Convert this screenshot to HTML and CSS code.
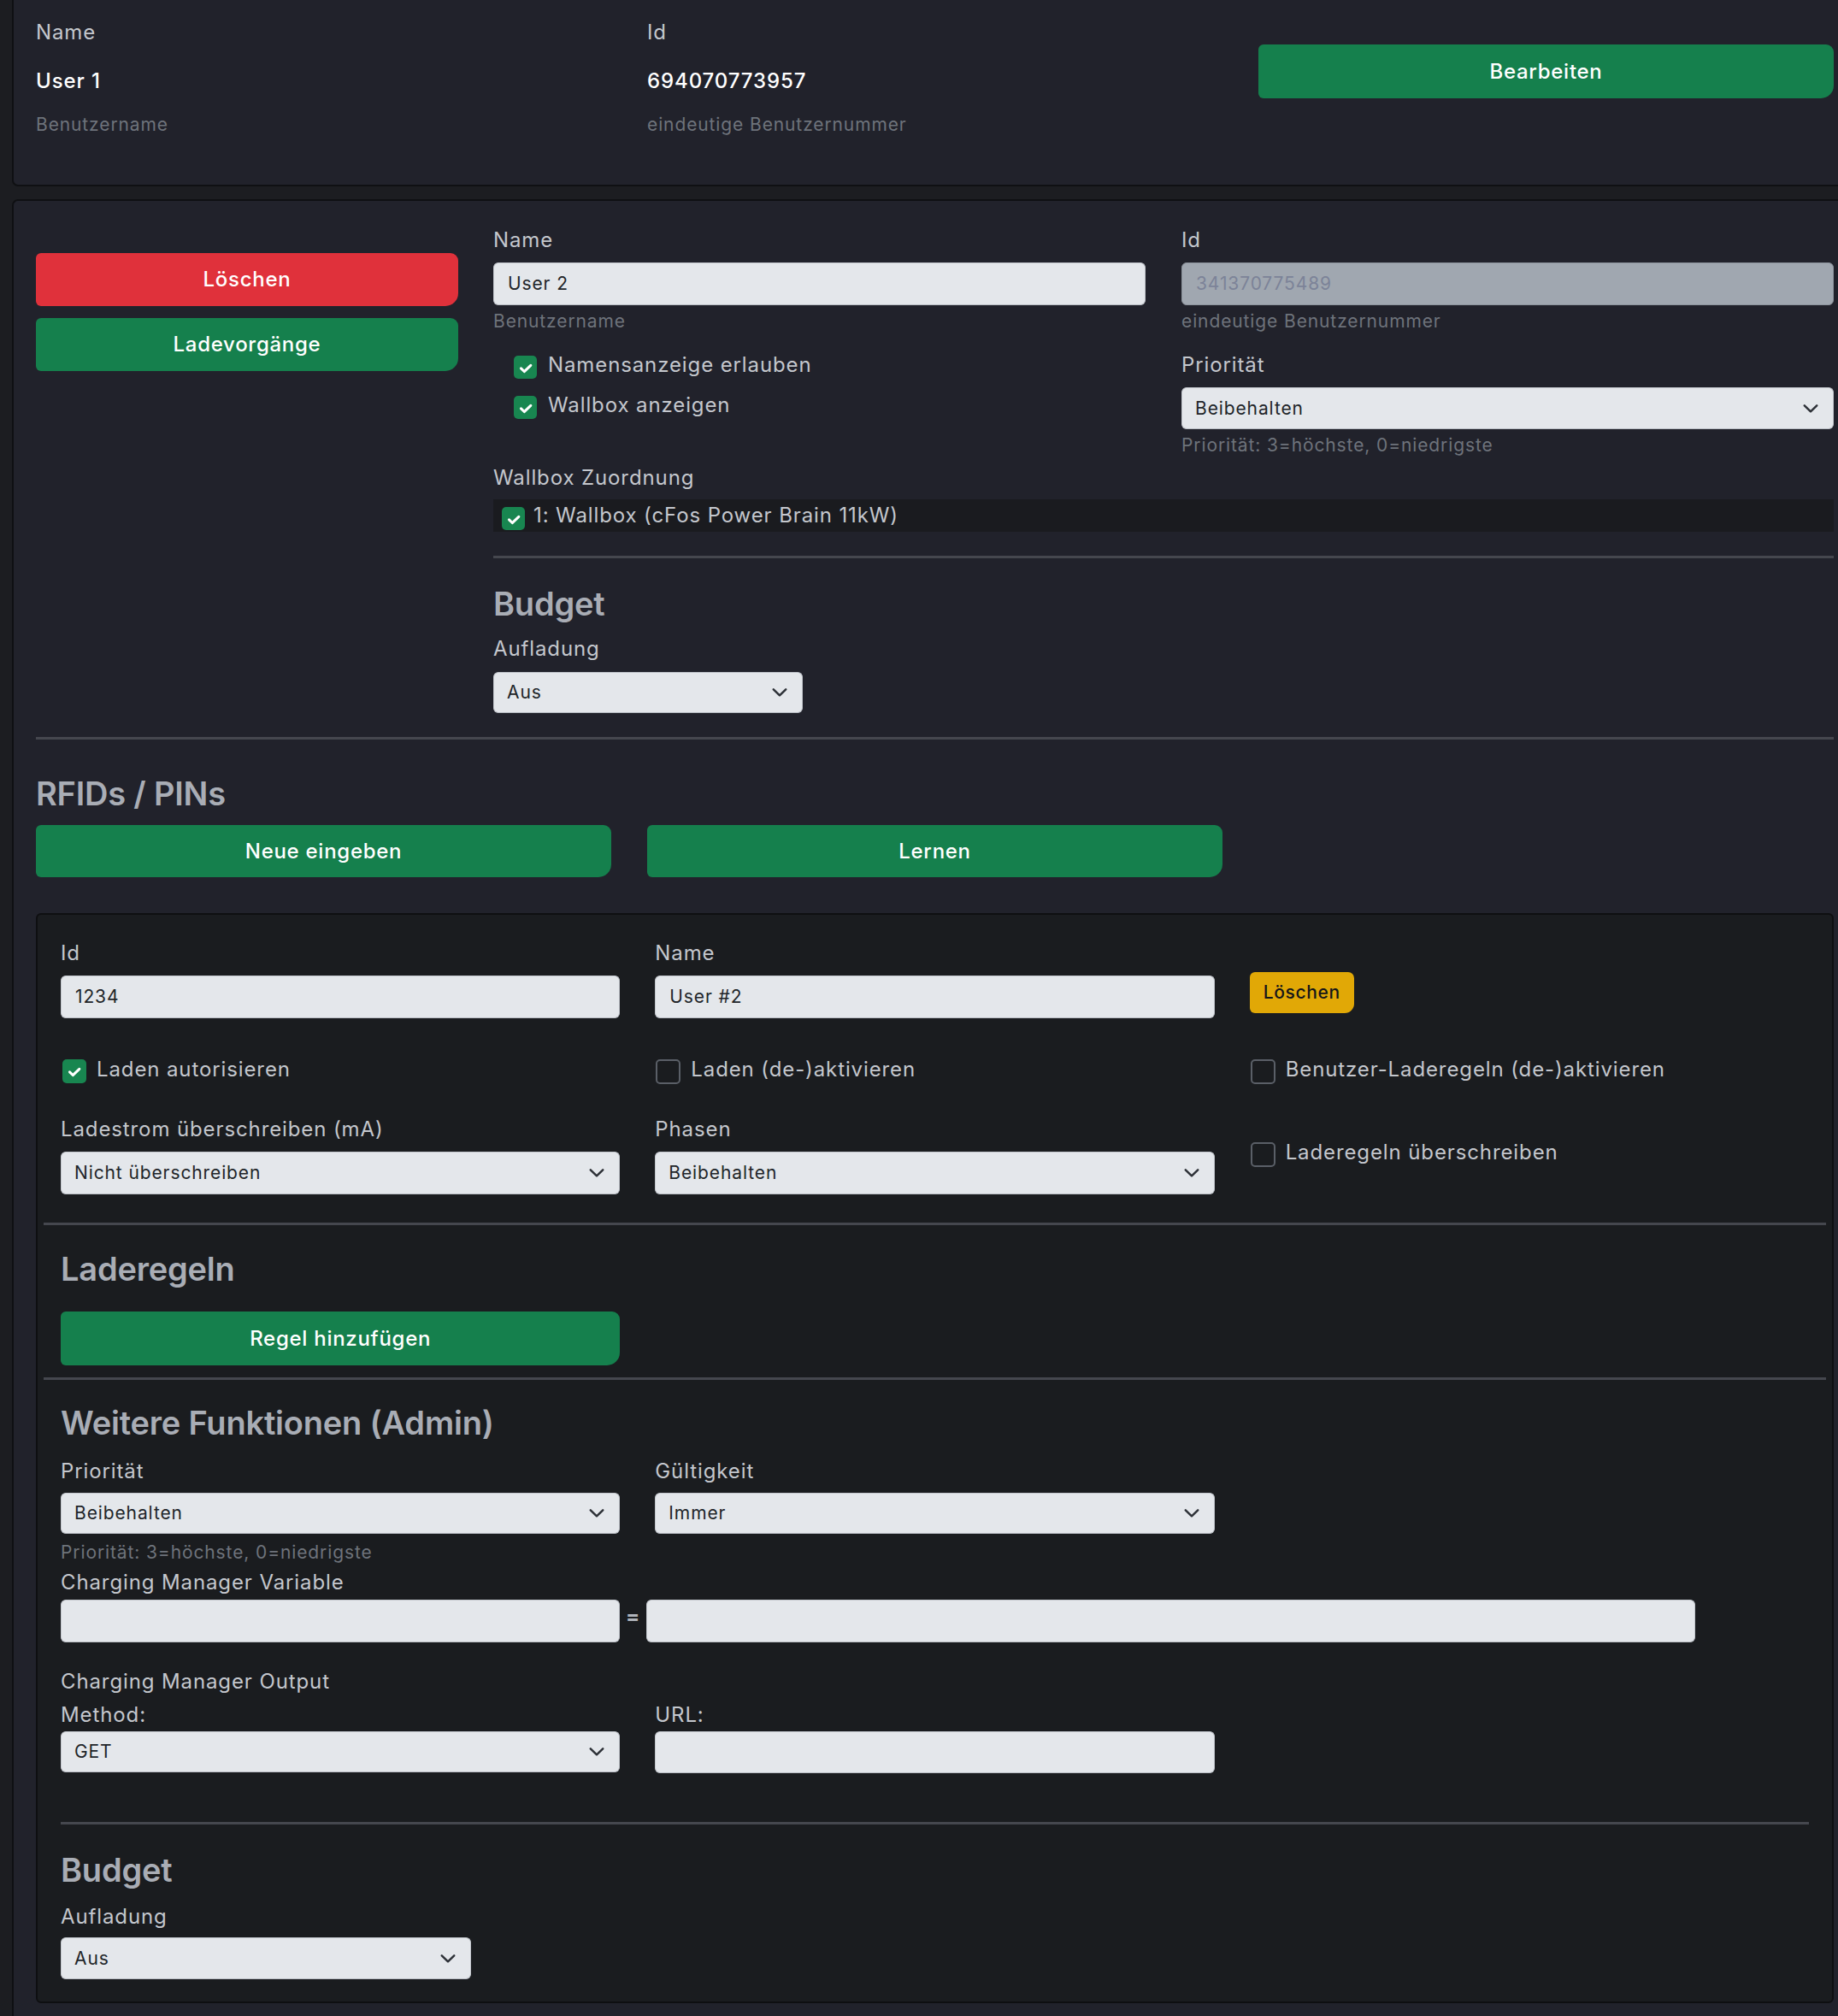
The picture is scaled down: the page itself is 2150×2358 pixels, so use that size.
FILE: index.html
```html
<!DOCTYPE html>
<html lang="de">
<head>
<meta charset="utf-8">
<title>Benutzer</title>
<link rel="stylesheet" href="styles.css">
</head>
<body>
<div class="page">

  <section class="card card-top">
    <div class="cols3">
      <div class="field">
        <div class="lbl">Name</div>
        <div class="val">User 1</div>
        <div class="hint">Benutzername</div>
      </div>
      <div class="field">
        <div class="lbl">Id</div>
        <div class="val">694070773957</div>
        <div class="hint">eindeutige Benutzernummer</div>
      </div>
      <div class="field">
        <button class="btn btn-green btn-edit">Bearbeiten</button>
      </div>
    </div>
  </section>

  <section class="card card-user">
    <div class="user-grid">
      <div class="side">
        <button class="btn btn-red btn-side">Löschen</button>
        <button class="btn btn-green btn-side">Ladevorgänge</button>
      </div>
      <div class="main">
        <div class="two">
          <div class="field">
            <div class="lbl">Name</div>
            <div class="input">User 2</div>
            <div class="hint hint-after">Benutzername</div>
            <div class="checks">
              <div class="check">
                <span class="box on"><svg viewBox="0 0 20 20"><path d="M5 10.8l3.4 3.3L15.3 7.6"/></svg></span>
                <span>Namensanzeige erlauben</span>
              </div>
              <div class="check">
                <span class="box on"><svg viewBox="0 0 20 20"><path d="M5 10.8l3.4 3.3L15.3 7.6"/></svg></span>
                <span>Wallbox anzeigen</span>
              </div>
            </div>
          </div>
          <div class="field">
            <div class="lbl">Id</div>
            <div class="input disabled">341370775489</div>
            <div class="hint hint-after">eindeutige Benutzernummer</div>
            <div class="lbl lbl-prio">Priorität</div>
            <div class="select sel-49">Beibehalten<svg class="chev" viewBox="0 0 16 9"><path d="M1.5 1.2l6.5 6.3 6.5-6.3"/></svg></div>
            <div class="hint hint-after">Priorität: 3=höchste, 0=niedrigste</div>
          </div>
        </div>
        <div class="lbl lbl-wallbox">Wallbox Zuordnung</div>
        <div class="band">
          <span class="box on"><svg viewBox="0 0 20 20"><path d="M5 10.8l3.4 3.3L15.3 7.6"/></svg></span>
          <span>1: Wallbox (cFos Power Brain 11kW)</span>
        </div>
        <hr class="rule rule-main">
        <h4 class="heading h-budget1">Budget</h4>
        <div class="lbl lbl-auf1">Aufladung</div>
        <div class="select sel-budget1">Aus<svg class="chev" viewBox="0 0 16 9"><path d="M1.5 1.2l6.5 6.3 6.5-6.3"/></svg></div>
      </div>
    </div>

    <hr class="rule rule-full">
    <h4 class="heading h-rfid">RFIDs / PINs</h4>
    <div class="cols3 btn-row">
      <button class="btn btn-green btn-rfid">Neue eingeben</button>
      <button class="btn btn-green btn-rfid">Lernen</button>
    </div>

    <div class="rfid-card">
      <div class="sec">
        <div class="grid3">
          <div class="field">
            <div class="lbl">Id</div>
            <div class="input in-rfid">1234</div>
          </div>
          <div class="field">
            <div class="lbl">Name</div>
            <div class="input in-rfid">User #2</div>
          </div>
          <div class="field">
            <button class="btn btn-yellow">Löschen</button>
          </div>
        </div>
        <div class="grid3 row-checks">
          <div class="check check-r">
            <span class="box on"><svg viewBox="0 0 20 20"><path d="M5 10.8l3.4 3.3L15.3 7.6"/></svg></span>
            <span>Laden autorisieren</span>
          </div>
          <div class="check check-r">
            <span class="box off"></span>
            <span>Laden (de-)aktivieren</span>
          </div>
          <div class="check check-r">
            <span class="box off"></span>
            <span>Benutzer-Laderegeln (de-)aktivieren</span>
          </div>
        </div>
        <div class="grid3 row-strom">
          <div class="field">
            <div class="lbl">Ladestrom überschreiben (mA)</div>
            <div class="select sel-50">Nicht überschreiben<svg class="chev" viewBox="0 0 16 9"><path d="M1.5 1.2l6.5 6.3 6.5-6.3"/></svg></div>
          </div>
          <div class="field">
            <div class="lbl">Phasen</div>
            <div class="select sel-50">Beibehalten<svg class="chev" viewBox="0 0 16 9"><path d="M1.5 1.2l6.5 6.3 6.5-6.3"/></svg></div>
          </div>
          <div class="check check-r check-over">
            <span class="box off"></span>
            <span>Laderegeln überschreiben</span>
          </div>
        </div>
      </div>

      <hr class="rule rule-wide rule-a">
      <div class="sec">
        <h4 class="heading h-lade">Laderegeln</h4>
        <div class="grid3">
          <button class="btn btn-green btn-rule">Regel hinzufügen</button>
        </div>
      </div>
      <hr class="rule rule-wide rule-b">

      <div class="sec">
        <h4 class="heading h-admin">Weitere Funktionen (Admin)</h4>
        <div class="grid3 row-prio">
          <div class="field">
            <div class="lbl">Priorität</div>
            <div class="select sel-48">Beibehalten<svg class="chev" viewBox="0 0 16 9"><path d="M1.5 1.2l6.5 6.3 6.5-6.3"/></svg></div>
            <div class="hint hint-prio">Priorität: 3=höchste, 0=niedrigste</div>
          </div>
          <div class="field">
            <div class="lbl">Gültigkeit</div>
            <div class="select sel-48">Immer<svg class="chev" viewBox="0 0 16 9"><path d="M1.5 1.2l6.5 6.3 6.5-6.3"/></svg></div>
          </div>
        </div>
        <div class="lbl lbl-cmv">Charging Manager Variable</div>
        <div class="cmv-row">
          <div class="input cmv-a"></div>
          <span class="eq">=</span>
          <div class="input cmv-b"></div>
        </div>
        <div class="lbl lbl-cmo">Charging Manager Output</div>
        <div class="grid3 row-method">
          <div class="field">
            <div class="lbl">Method:</div>
            <div class="select sel-48 sel-method">GET<svg class="chev" viewBox="0 0 16 9"><path d="M1.5 1.2l6.5 6.3 6.5-6.3"/></svg></div>
          </div>
          <div class="field">
            <div class="lbl">URL:</div>
            <div class="input in-url"></div>
          </div>
        </div>
        <hr class="rule rule-admin">
        <h4 class="heading h-budget2">Budget</h4>
        <div class="lbl lbl-auf2">Aufladung</div>
        <div class="select sel-budget2">Aus<svg class="chev" viewBox="0 0 16 9"><path d="M1.5 1.2l6.5 6.3 6.5-6.3"/></svg></div>
      </div>
    </div>
  </section>

</div>
</body>
</html>
```

FILE: styles.css
```css
* { box-sizing: border-box; }

html, body {
  margin: 0;
  padding: 0;
}

body {
  background: #1c1d21;
  color: #c4c7cd;
  font-family: Inter, "Liberation Sans", sans-serif;
  font-size: 24px;
  line-height: 36px;
  letter-spacing: 0.037em;
  overflow: hidden;
}

.page {
  padding-left: 14px;
}

/* ---------- cards ---------- */
.card {
  background: #21222b;
  border: 2px solid #0f1013;
  border-right: none;
}

.card-top {
  border-top: none;
  border-radius: 0 0 0 7px;
  padding: 20px 5px 55px 26px;
}

.card-user {
  margin-top: 15px;
  border-radius: 7px 0 0 0;
  padding: 28px 5px 40px 26px;
}

.cols3 {
  display: grid;
  grid-template-columns: repeat(3, 1fr);
  column-gap: 42px;
}

.field {
  display: flex;
  flex-direction: column;
  align-items: stretch;
  min-width: 0;
}

.lbl {
  color: #c4c7cd;
  white-space: nowrap;
}

.val {
  color: #ffffff;
  font-weight: 500;
  margin-top: 21px;
}

.hint {
  font-size: 21px;
  line-height: 31px;
  color: #6e737b;
  white-space: nowrap;
}

.card-top .hint { margin-top: 17px; }

/* ---------- buttons ---------- */
.btn {
  display: flex;
  align-items: center;
  justify-content: center;
  border: none;
  margin: 0;
  padding: 0;
  color: #ffffff;
  font-family: inherit;
  font-size: 24px;
  font-weight: 500;
  line-height: 36px;
  letter-spacing: 0.03em;
  border-radius: 6px 9px 15px 6px;
  cursor: pointer;
}

.btn-green { background: #15804d; }
.btn-red { background: #e0313b; }

.btn-yellow {
  background: #e1a806;
  color: #15161a;
  font-size: 21px;
  font-weight: 500;
  height: 48px;
  padding: 0 16px;
  margin-top: 40px;
  align-self: flex-start;
  border-radius: 6px 7px 11px 6px;
}

.btn-edit {
  width: 100%;
  height: 63px;
  margin-top: 32px;
}

/* ---------- user card ---------- */
.user-grid {
  display: grid;
  grid-template-columns: 494px 1fr;
  column-gap: 41px;
}

.side {
  display: flex;
  flex-direction: column;
  gap: 14px;
  padding-top: 33px;
}

.btn-side { height: 62px; width: 100%; }

.two {
  display: grid;
  grid-template-columns: 1fr 1fr;
  column-gap: 42px;
}

.input {
  height: 50px;
  margin-top: 8px;
  background: #e4e7eb;
  border: 1px solid #c3c7cd;
  border-bottom-color: #b9bdc4;
  border-radius: 6px;
  padding: 0 16px;
  display: flex;
  align-items: center;
  font-size: 21px;
  color: #212529;
}

.input.disabled {
  background: #a0a7b0;
  border-color: #8c939c;
  color: #7c8398;
}

.hint-after { margin-top: 3px; }

.checks {
  margin-top: 18px;
  padding-left: 24px;
  display: flex;
  flex-direction: column;
  gap: 11px;
}

.check {
  display: flex;
  align-items: flex-start;
  gap: 13px;
  color: #c4c7cd;
  white-space: nowrap;
}

.box {
  flex: none;
  width: 27px;
  height: 27px;
  margin-top: 7px;
  border-radius: 5px;
  display: flex;
  align-items: center;
  justify-content: center;
}

.box.on { background: #188650; }

.box.on svg {
  width: 22px;
  height: 22px;
  fill: none;
  stroke: #ffffff;
  stroke-width: 2.8;
  stroke-linecap: round;
  stroke-linejoin: round;
}

.box.off {
  width: 29px;
  height: 29px;
  margin-top: 6px;
  border: 2px solid #5a5f67;
  background: transparent;
}

.lbl-prio { margin-top: 18px; }

.select {
  display: flex;
  align-items: center;
  justify-content: space-between;
  margin-top: 8px;
  background: #e4e7eb;
  border: 1px solid #c3c7cd;
  border-bottom-color: #b9bdc4;
  border-radius: 6px;
  padding: 0 17px 0 15px;
  font-size: 21px;
  color: #212529;
}

.chev {
  flex: none;
  width: 18px;
  height: 10px;
  fill: none;
  stroke: #2c3036;
  stroke-width: 2.2;
  stroke-linecap: round;
  stroke-linejoin: round;
}

.sel-49 { height: 49px; }
.sel-50 { height: 50px; }
.sel-48 { height: 48px; }

.lbl-wallbox { margin-top: 5px; }

.band {
  margin-top: 7px;
  height: 38px;
  background: #1a1b1f;
  display: flex;
  align-items: flex-start;
  gap: 10px;
  padding: 1px 0 0 10px;
  color: #c4c7cd;
  white-space: nowrap;
}

.band .box { margin-top: 8px; }

.rule {
  border: none;
  height: 3px;
  background: #45474e;
  margin: 0;
}

.rule-main { margin-top: 28px; }

.heading {
  margin: 0;
  font-size: 38px;
  line-height: 46px;
  font-weight: 600;
  color: #a9adb5;
  letter-spacing: -0.2px;
  white-space: nowrap;
}

.h-budget1 { margin-top: 30px; }
.lbl-auf1 { margin-top: 12px; }

.sel-budget1 {
  width: 362px;
  height: 48px;
  margin-top: 9px;
}

.rule-full { margin-top: 28px; }
.h-rfid { margin-top: 40px; }

.btn-row { margin-top: 14px; }
.btn-rfid { height: 61px; }

/* ---------- rfid card ---------- */
.rfid-card {
  margin-top: 42px;
  background: #1a1c1f;
  border: 2px solid #0e0f11;
  border-radius: 6px;
  padding: 27px 7px 26px 7px;
}

.sec { padding: 0 20px; }

.grid3 {
  display: grid;
  grid-template-columns: repeat(3, 1fr);
  column-gap: 41px;
}

.in-rfid { margin-top: 8px; }

.row-checks { margin-top: 42px; }

.check-r { gap: 12px; }
.check-r .box.on { width: 28px; height: 28px; margin-top: 6px; margin-left: 2px; }
.check-r .box.off { margin-left: 1px; }

.row-strom { margin-top: 34px; }

.check-over { margin-top: 27px; align-self: flex-start; }

.rule-a { margin-top: 33px; }
.h-lade { margin-top: 28px; }

.btn-rule {
  height: 63px;
  margin-top: 27px;
  width: 100%;
}

.rule-b { margin-top: 14px; }
.h-admin { margin-top: 27px; }

.row-prio { margin-top: 16px; }
.row-prio .select { margin-top: 7px; }
.hint-prio { margin-top: 6px; }

.lbl-cmv { margin-top: 2px; }

.cmv-row {
  display: flex;
  align-items: center;
  margin-top: 2px;
}

.cmv-row .input { margin-top: 0; }
.cmv-a { width: 654px; }
.cmv-b { width: 1227px; }

.eq {
  width: 31px;
  text-align: center;
  font-size: 24px;
  line-height: 24px;
  font-weight: 700;
  color: #b0b4bb;
  padding-bottom: 10px;
}

.lbl-cmo { margin-top: 28px; }

.row-method { margin-top: 3px; }
.row-method .select,
.row-method .input { margin-top: 1px; }
.in-url { height: 49px; }

.rule-admin { margin-top: 57px; }
.h-budget2 { margin-top: 30px; }
.lbl-auf2 { margin-top: 14px; }

.sel-budget2 {
  width: 480px;
  height: 49px;
  margin-top: 6px;
}
```
